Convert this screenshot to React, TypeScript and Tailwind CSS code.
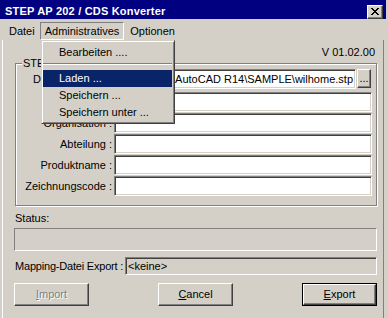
import type React from 'react'

const sunken =
  'border border-t-[#808080] border-l-[#808080] border-b-white border-r-white shadow-[inset_1px_1px_0_#404040,inset_-1px_-1px_0_#d4d0c8]'
const raised =
  'border border-t-white border-l-white border-b-[#404040] border-r-[#404040] shadow-[inset_-1px_-1px_0_#808080]'

function CloseGlyph(): React.JSX.Element {
  // classic 8x7 close cross
  const px: [number, number, number][] = [
    [0, 0, 2], [6, 0, 2],
    [1, 1, 2], [5, 1, 2],
    [2, 2, 4],
    [3, 3, 2],
    [2, 4, 4],
    [1, 5, 2], [5, 5, 2],
    [0, 6, 2], [6, 6, 2]
  ]
  return (
    <svg width="8" height="7" viewBox="0 0 8 7" shapeRendering="crispEdges">
      {px.map(([x, y, w], i) => (
        <rect key={i} x={x} y={y} width={w} height={1} fill="#000" />
      ))}
    </svg>
  )
}

interface FieldRowProps {
  label: string
  className?: string
  labelClass?: string
  children?: React.ReactNode
}

function FieldRow({ label, className = '', labelClass = 'text-right', children }: FieldRowProps): React.JSX.Element {
  return (
    <div className={`flex items-center h-[20px] ${className}`}>
      <div className={`w-[96px] leading-[13px] whitespace-nowrap overflow-hidden ${labelClass}`}>{label}</div>
      <div className="ml-[2px] flex">
        {children ?? <div className={`w-[258px] h-[20px] bg-white ${sunken}`} />}
      </div>
    </div>
  )
}

function Button({
  children,
  disabled,
  isDefault
}: {
  children: React.ReactNode
  disabled?: boolean
  isDefault?: boolean
}): React.JSX.Element {
  return (
    <div className={`w-[75px] h-[23px] ${isDefault ? 'border border-black' : ''}`}>
      <div
        className={`w-full h-full flex items-center justify-center leading-[13px] ${raised} ${
          disabled ? 'text-[#808080] [text-shadow:1px_1px_0_#fff]' : ''
        }`}
      >
        {children}
      </div>
    </div>
  )
}

export default function App(): React.JSX.Element {
  return (
    <div className="w-[388px] h-[318px] bg-[#d4d0c8] relative overflow-hidden text-[11px] text-black font-['Liberation_Sans',Arial,sans-serif] select-none">
      {/* Title bar */}
      <div className="w-[386px] h-[19px] bg-[#000080] flex items-center justify-between pl-[5px] pr-[3px] pt-[4px]">
        <span className="text-white font-bold text-[11px] tracking-[0.2px] leading-[13px] whitespace-nowrap">
          STEP AP 202 / CDS Konverter
        </span>
        <div className={`w-[16px] h-[14px] bg-[#d4d0c8] flex items-center justify-center ${raised}`}>
          <CloseGlyph />
        </div>
      </div>

      {/* Menu bar */}
      <div className="flex h-[21px] pt-[3px] pl-[4px]">
        <div className="h-[18px] px-[4px] border border-transparent leading-[16px]">Datei</div>
        <div className="h-[18px] px-[4px] border border-t-[#808080] border-l-[#808080] border-b-white border-r-white leading-[16px]">
          Administratives
        </div>
        <div className="h-[18px] px-[5px] border border-transparent leading-[16px]">Optionen</div>
      </div>

      {/* Client panel */}
      <div className="ml-[2px] w-[382px] h-[278px] border-l border-l-white border-r border-r-[#808080]">
        {/* Version */}
        <div className="pt-[6px] pr-[8px] text-right leading-[13px]">V 01.02.00</div>

        {/* Group box */}
        <div className="relative mt-[4px] ml-[12px] w-[362px] h-[143px] border border-[#808080] shadow-[inset_1px_1px_0_#fff,1px_1px_0_#fff] pt-[5px]">
          <span className="absolute -top-[7px] left-[6px] px-[1px] bg-[#d4d0c8] leading-[13px]">STEP-Datei</span>
          <FieldRow label="Dateiname :" labelClass="text-left pl-[17px]">
            <div className={`w-[242px] h-[20px] bg-white ${sunken} flex items-center justify-end overflow-hidden pr-[2px]`}>
              <span className="whitespace-nowrap leading-[13px]">D:\Programme\AutoCAD R14\SAMPLE\wilhome.stp</span>
            </div>
            <div className={`ml-[1px] w-[14px] h-[19px] flex items-center justify-center leading-[13px] ${raised}`}>
              ...
            </div>
          </FieldRow>
          <FieldRow label="Autor :" className="mt-[3px]" />
          <FieldRow label="Organisation :" className="mt-[1px]" />
          <FieldRow label="Abteilung :" className="mt-[1px]" />
          <FieldRow label="Produktname :" className="mt-[1px]" />
          <FieldRow label="Zeichnungscode :" className="mt-[1px]" />
        </div>

        {/* Status */}
        <div className="mt-[6px] pl-[12px] leading-[13px]">Status:</div>
        <div className="mt-[3px] ml-[11px] w-[363px] h-[23px] border border-t-[#808080] border-l-[#808080] border-b-white border-r-white" />

        {/* Mapping */}
        <div className="mt-[6px] flex items-center justify-between h-[18px] pl-[12px] pr-[6px]">
          <div className="leading-[13px] whitespace-nowrap tracking-[-0.2px]">Mapping-Datei Export :</div>
          <div className={`w-[252px] h-[18px] ${sunken} flex items-center pl-[2px] leading-[13px]`}>&lt;keine&gt;</div>
        </div>

        {/* Buttons */}
        <div className="mt-[8px] flex pl-[11px] gap-[69px]">
          <Button disabled>
            <span className="underline">I</span>mport
          </Button>
          <Button>
            <span className="underline">C</span>ancel
          </Button>
          <Button isDefault>
            <span className="underline">E</span>xport
          </Button>
        </div>
      </div>

      {/* Dropdown menu */}
      <div className="absolute left-[41px] top-[40px] w-[134px] border border-t-[#d4d0c8] border-l-[#d4d0c8] border-r-[#404040] border-b-[#404040] shadow-[inset_1px_1px_0_#fff,inset_-1px_-1px_0_#808080] pl-[1px] pr-[2px] pt-[3px] pb-[2px] bg-[#d4d0c8]">
        <div className="h-[17px] pl-[16px] leading-[17px] whitespace-nowrap">Bearbeiten ....</div>
        <div className="h-[9px] pt-[2px]">
          <div className="h-[1px] bg-[#808080]" />
          <div className="h-[1px] bg-white" />
        </div>
        <div className="h-[17px] pl-[16px] leading-[17px] whitespace-nowrap bg-[#0a246a] text-white">Laden ...</div>
        <div className="h-[17px] pl-[16px] leading-[17px] whitespace-nowrap">Speichern ...</div>
        <div className="h-[17px] pl-[16px] leading-[17px] whitespace-nowrap">Speichern unter ...</div>
      </div>
    </div>
  )
}
